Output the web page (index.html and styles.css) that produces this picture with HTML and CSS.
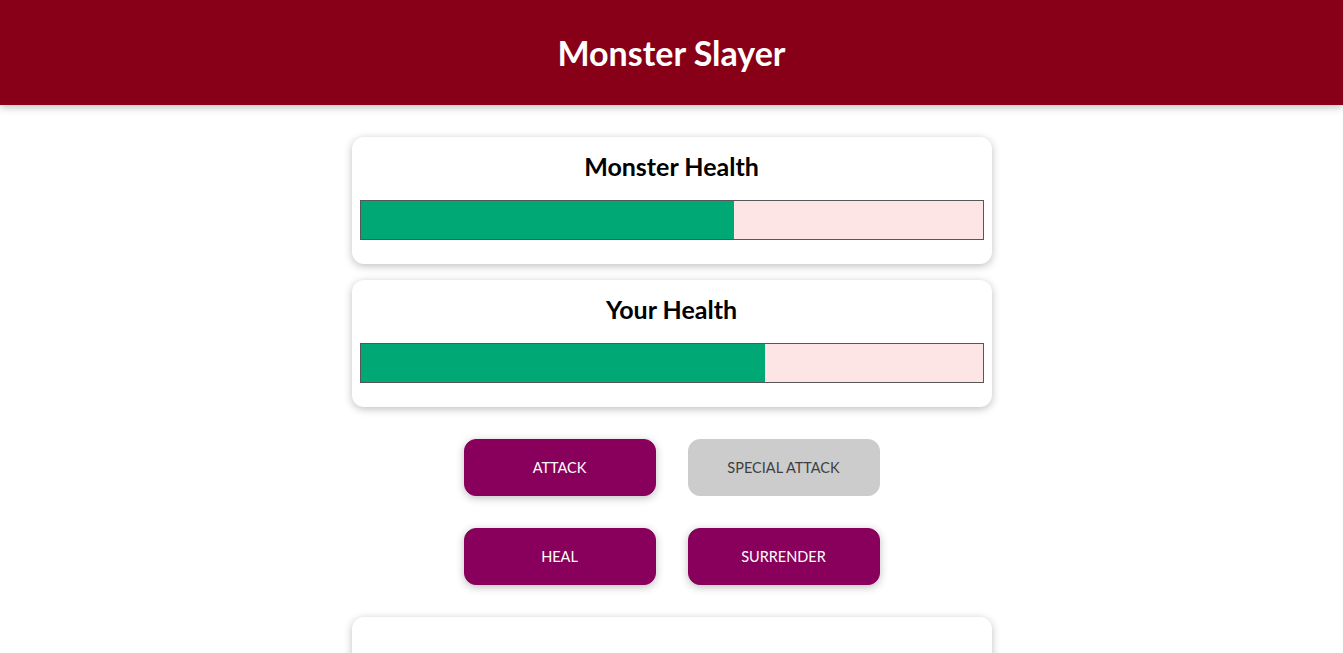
FILE: index.html
```html
<!DOCTYPE html>
<html lang="en">
<head>
<meta charset="utf-8">
<title>Monster Slayer</title>
<link rel="stylesheet" href="styles.css">
</head>
<body>
<header class="header">
  <h1 class="title">Monster Slayer</h1>
</header>
<div class="game">
  <section class="container">
    <h2 class="card-title">Monster Health</h2>
    <div class="healthbar"><div class="healthbar__value" style="width: 60%"></div></div>
  </section>
  <section class="container">
    <h2 class="card-title">Your Health</h2>
    <div class="healthbar"><div class="healthbar__value" style="width: 65%"></div></div>
  </section>
  <section class="controls">
    <button class="btn">ATTACK</button>
    <button class="btn" disabled>SPECIAL ATTACK</button>
    <button class="btn">HEAL</button>
    <button class="btn">SURRENDER</button>
  </section>
  <section class="container log">
    <h2 class="log-title">Battle Log</h2>
    <ul class="log-list"></ul>
  </section>
</div>
</body>
</html>
```
FILE: styles.css
```css
* { box-sizing: border-box; }
html { font-family: "Lato", "Open Sans", sans-serif; }
body { margin: 0; background: #fff; }

.header {
  box-shadow: 0 2px 8px rgba(0, 0, 0, 0.26);
  padding: 8px;
  background-color: #880017;
  color: #fff;
  text-align: center;
  margin-bottom: 32px;
  height: 105px;
  display: flex;
  align-items: center;
  justify-content: center;
}
.title {
  margin: 0;
  font-size: 34px;
  font-weight: 700;
  line-height: 1;
}

.game { width: 640px; margin: 0 auto; }

.container {
  text-align: center;
  padding: 8px 8px;
  box-shadow: 0 2px 8px rgba(0, 0, 0, 0.26);
  border-radius: 12px;
  margin: 16px auto;
  background: #fff;
}
.game > .container:first-child { margin-top: 0; }

.card-title {
  margin: 4px 0 0;
  font-size: 25px;
  font-weight: 700;
  line-height: 35px;
  color: #000;
}

.healthbar {
  width: 100%;
  height: 40px;
  border: 1px solid #575757;
  margin: 16px 0;
  background: #fde5e5;
}
.healthbar__value { background-color: #00a876; height: 100%; }

.controls {
  display: flex;
  flex-wrap: wrap;
  justify-content: center;
  margin-top: 16px;
}
.btn {
  font: inherit;
  font-size: 14.5px;
  line-height: 23px;
  border: 1px solid #88005b;
  background-color: #88005b;
  color: #fff;
  padding: 16px 24px;
  border-radius: 12px;
  margin: 16px;
  width: 192px;
  box-shadow: 0 2px 8px rgba(0, 0, 0, 0.26);
}
.btn:disabled {
  background-color: #ccc;
  border-color: #ccc;
  box-shadow: none;
  color: #3f3f3f;
}

.log-title {
  margin: 20px 0;
  font-size: 25px;
  font-weight: 700;
  line-height: 35px;
}
.log-list { list-style: none; margin: 0; padding: 0; min-height: 40px; }
```
